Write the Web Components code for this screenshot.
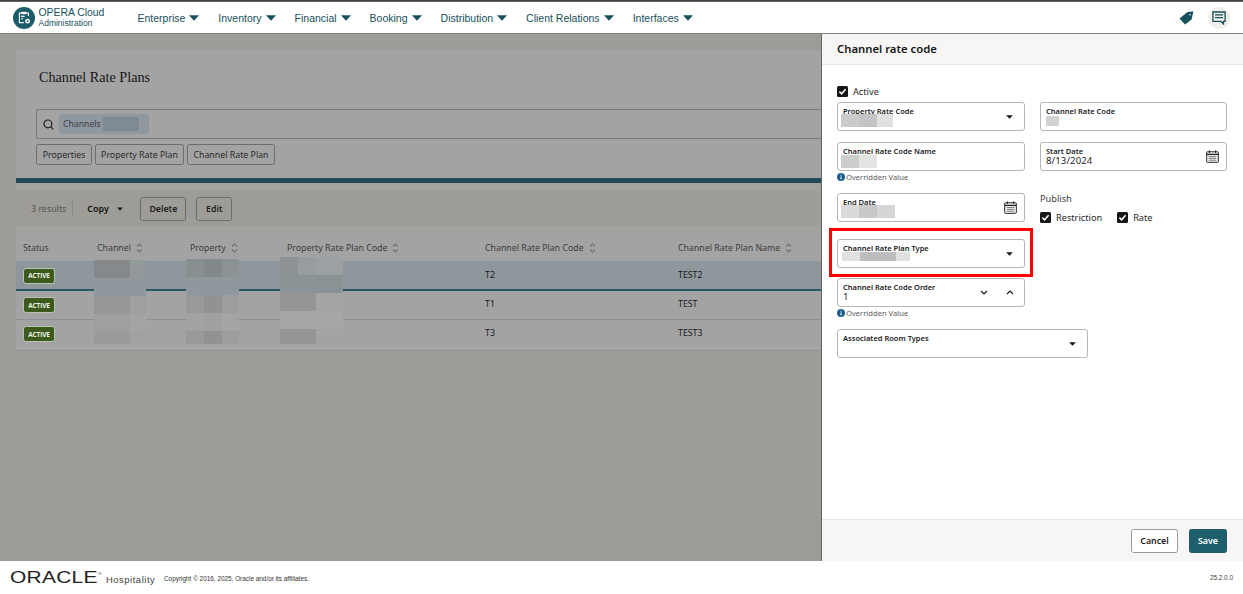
<!DOCTYPE html>
<html lang="en"><head><meta charset="utf-8"><title>Channel Rate Plans</title>
<style>
html,body{margin:0;padding:0;height:100%;overflow:hidden;background:#fff}
body{font-family:"Noto Sans","Liberation Sans",sans-serif}
</style></head><body>
<app-shell>
  <app-header slot="header"></app-header>
  <rate-plans-page slot="content"></rate-plans-page>
  <rate-drawer slot="drawer"></rate-drawer>
  <app-footer slot="footer"></app-footer>
</app-shell>
<script>
const caret=(w,h,c)=>`<svg width="${w}" height="${h}" viewBox="0 0 10 6" style="flex:none"><path d="M0 .3h10L5 5.8z" fill="${c}"/></svg>`;
const calendar=`<svg width="13" height="13" viewBox="0 0 13 13" fill="none" stroke="#222" stroke-width="1"><rect x=".7" y="1.8" width="11.6" height="10.5" rx=".6"/><path d="M3.4.4v2.6M9.6.4v2.6"/><path d="M.7 4.4h11.6" stroke-width="1.4"/><path d="M2.6 6.6h7.8M2.6 8.4h7.8M2.6 10.2h7.8" stroke="#777"/></svg>`;
const sortIc=`<svg width="7" height="10" viewBox="0 0 7 10" fill="none" stroke="#444" stroke-width=".9" style="flex:none"><path d="M1 3.4 3.5 1 6 3.4M1 6.6 3.5 9 6 6.6"/></svg>`;
class Base extends HTMLElement{
  constructor(){super();this.attachShadow({mode:'open'})}
  render(html){this.shadowRoot.innerHTML=html}
}
class AppShell extends Base{connectedCallback(){this.render(`<style>
:host{display:flex;flex-direction:column;height:594px;width:1243px;position:relative;overflow:hidden;background:#fff}
.main{flex:1;min-height:0;display:flex;background:#9d9c98}
.c{flex:1;min-width:0;display:flex;flex-direction:column}
.topline{height:2px;background:linear-gradient(#2d2d2d,#777);flex:none}
</style><div class="topline"></div><slot name="header"></slot>
<div class="main"><div class="c"><slot name="content"></slot></div><slot name="drawer"></slot></div>
<slot name="footer"></slot>`)}}
class NavItem extends Base{connectedCallback(){this.render(`<style>
:host{display:inline-flex;align-items:center;gap:4px;color:#17505c;font:10.5px "Liberation Sans",sans-serif;white-space:nowrap}
</style><slot></slot>${caret(10,6,'#17505c')}`)}}
class AppHeader extends Base{connectedCallback(){this.render(`<style>
:host{display:flex;align-items:center;flex:none;background:#fff;position:relative;z-index:2;font-family:"Liberation Sans",sans-serif;border-bottom:1px solid #85837f;box-sizing:content-box;height:31px}
.logo{margin-left:13px;width:22px;height:22px;flex:none;margin-top:1px}
.brand{margin-left:3.5px;width:99px;flex:none;color:#17505c;display:flex;flex-direction:column;gap:1px;margin-top:-1px}
.b1{font-size:10.4px;line-height:10px;display:block}
.b2{font-size:8.5px;line-height:8px;display:block}
nav{display:flex;gap:19px;margin-top:1px}
.sp{flex:1}
.chat{width:22px;height:22px;border-radius:50%;background:#f1efea;display:flex;align-items:center;justify-content:center;margin:1px 13px 0 14px}
.tag{margin-top:1px}
</style>
<svg class="logo" viewBox="0 0 22 22"><circle cx="11" cy="11" r="11" fill="#1c5c68"/>
<g fill="none" stroke="#fff" stroke-width="1.1"><path d="M9 6H6.4v9.6h4.4"/><path d="M13 6h2.4v3"/><rect x="8.4" y="4.8" width="5" height="2.4" fill="#fff" stroke="none"/><path d="M8.2 9.4h3.4M8.2 11.8h2"/></g>
<circle cx="14.6" cy="14.2" r="2.4" fill="#fff"/><circle cx="14.6" cy="14.2" r=".9" fill="#1c5c68"/></svg>
<span class="brand"><span class="b1">OPERA Cloud</span><span class="b2">Administration</span></span>
<nav><nav-item>Enterprise</nav-item><nav-item>Inventory</nav-item><nav-item>Financial</nav-item><nav-item>Booking</nav-item><nav-item>Distribution</nav-item><nav-item>Client Relations</nav-item><nav-item>Interfaces</nav-item></nav>
<span class="sp"></span>
<svg class="tag" width="15" height="14" viewBox="0 0 15 14"><path d="M14.4.3 8.2 1.2.5 7.4 6 13.6l6.6-5.2z" fill="#17505c"/><circle cx="11" cy="3.8" r=".8" fill="#fff"/></svg>
<span class="chat"><svg width="14" height="14" viewBox="0 0 14 14" fill="none" stroke="#17505c" stroke-width="1.3"><path d="M.9 1h12.2v9.4h-1.6v2.6L9 10.4H.9z"/><path d="M3 3.8h8M3 6.6h8" stroke-width="1.2"/></svg></span>`)}}
class BlurMosaic extends Base{connectedCallback(){
  const cols=this.dataset.cols,rows=this.dataset.rows,t=this.dataset.tiles.split(' ');
  this.render(`<style>:host{display:grid;position:absolute;grid-template-columns:${cols.split(' ').map(v=>v+'px').join(' ')};grid-template-rows:${rows.split(' ').map(v=>v+'px').join(' ')};z-index:1}</style>`+t.map(c=>`<i style="background:${c}"></i>`).join(''))}}
class PlainButton extends Base{connectedCallback(){
  const k=this.getAttribute('kind')||'plain';
  const st={plain:`border:1px solid #6d6d6b;background:transparent;color:#1f1f1f`,
    chip:`border:1px solid #6d6d6b;background:transparent;color:#2a2a2a`,
    white:`border:1px solid #9a9a98;background:#fff;color:#1f1f1f`,
    save:`border:1px solid #1b5a66;background:#1f5f6b;color:#fff;`}[k];
  this.render(`<style>:host{display:inline-flex;align-items:center;justify-content:center;box-sizing:border-box;border-radius:2.5px;${st};font:${k=='chip'?400:600} 8.8px "Noto Sans",sans-serif;height:var(--h,24px);white-space:nowrap}</style><slot></slot>`)}}
class RatePlansPage extends Base{connectedCallback(){this.render(`<style>
:host{display:flex;flex-direction:column;flex:1;padding:16px 0 0 16px;background:#9d9c98;min-height:0}
.top{background:#a3a3a3;height:128px;flex:none;display:flex;flex-direction:column;position:relative}
h1{font:400 14.2px "Liberation Serif",serif;margin:20px 0 0 23px;color:#161616;height:14px;line-height:14px}
.search{margin:25px 0 0 20px;height:30px;box-sizing:border-box;border:1px solid #787876;border-right:none;border-radius:2px 0 0 2px;display:flex;align-items:center;padding-left:6px}
.chip{margin-left:5px;width:90px;height:20px;background:#8f979f;border-radius:3px;display:flex;align-items:center;padding-left:4px;font:400 8.7px "Noto Sans",sans-serif;color:#3c444a;position:relative;box-sizing:border-box}
.row{display:flex;gap:3px;margin:5px 0 0 20px;--h:21px}
.bar{height:5px;background:#1f4a55;flex:none}
.toolwrap{background:#a2a2a1;padding-top:8px;flex:none}
.tool{height:35px;background:#9d9c96;display:flex;align-items:center;font:400 8.9px "Noto Sans",sans-serif;color:#55554f;position:relative}
.res{margin-left:15px}
.div{width:1px;height:16px;background:#8c8b85;margin-left:6px}
.copy{margin-left:14px;color:#111;font-weight:600;display:flex;align-items:center;gap:8px;width:53px}
</style>
<div class="top"><h1>Channel Rate Plans</h1>
<div class="search"><svg width="11" height="11" viewBox="0 0 11 11" fill="none" stroke="#1d1d1d" stroke-width="1.2"><circle cx="4.9" cy="4.9" r="3.9"/><path d="M7.7 7.7 10.3 10.3"/></svg>
<span class="chip">Channels<blur-mosaic style="left:44px;top:3px" data-cols="18 18" data-rows="14" data-tiles="#7f8a92 #7f8a92"></blur-mosaic></span></div>
<div class="row"><plain-button kind="chip" style="width:56px">Properties</plain-button><plain-button kind="chip" style="width:89px">Property Rate Plan</plain-button><plain-button kind="chip" style="width:88px">Channel Rate Plan</plain-button></div>
</div>
<div class="bar"></div>
<div class="toolwrap"><div class="tool"><span class="res">3 results</span><span class="div"></span><span class="copy">Copy ${caret(6,4,'#222')}</span><plain-button style="width:46px">Delete</plain-button><plain-button style="width:36px;margin-left:10px">Edit</plain-button></div></div>
<plan-table></plan-table>`)}}
class PlanTable extends Base{connectedCallback(){
  const heads=[['Status',0],['Channel',1],['Property',1],['Property Rate Plan Code',1],['Channel Rate Plan Code',1],['Channel Rate Plan Name',1]];
  const rows=[['T2','TEST2',1],['T1','TEST',0],['T3','TEST3',0]];
  this.render(`<style>
:host{display:block;position:relative;background:#a2a2a1;padding-top:9px;flex:none;font:400 8.8px "Noto Sans",sans-serif}
.g{display:grid;grid-template-columns:74px 93px 97px 198px 193px 1fr}
.g>*{padding-left:7px;display:flex;align-items:center;gap:5px;white-space:nowrap;min-width:0;box-sizing:border-box}
.h{height:26px;color:#3d3d3d;background:#a3a3a3}
.r{height:29px;color:#1a1a1a;border-bottom:1px solid #8f8f8f;background:#a3a3a3;box-sizing:border-box;padding-bottom:2px}
.r.s{height:30px;background:#8e979c;border-bottom:2px solid #245a65;box-shadow:0 1px 0 #b4b4b4;padding-bottom:1px}
.r.l{border-bottom-color:#b0b0af}
.badge{display:inline-flex;align-items:center;justify-content:center;width:32px;height:16px;box-sizing:border-box;margin-top:2px;background:#3b5a1b;border:1px solid #b9c2ae;border-radius:3px;color:#eef2e6;font:700 6.4px "Open Sans",sans-serif;letter-spacing:-.1px}
</style>
<div class="g h">${heads.map(h=>`<span>${h[0]}${h[1]?sortIc:''}</span>`).join('')}</div>
${rows.map((r,i)=>`<div class="g r ${r[2]?'s':''} ${i==2?'l':''}"><span><span class="badge">ACTIVE</span></span><span></span><span></span><span></span><span>${r[0]}</span><span>${r[1]}</span></div>`).join('')}
<blur-mosaic style="left:78px;top:34px" data-cols="36 16" data-rows="18 18 18 18 12" data-tiles="#85898b #93989b #8f989c #8f989c #979797 #a0a0a0 #9f9f9f #a4a4a4 #9a9a9a #a2a2a2"></blur-mosaic>
<blur-mosaic style="left:170px;top:33px" data-cols="18 18 17" data-rows="18 18 18 18 13" data-tiles="#898e91 #83888a #8c9194 #8f989d #8f989d #8f989d #9a9a9a #929292 #9d9d9d #a2a2a2 #a0a0a0 #a4a4a4 #999999 #929292 #9d9d9d"></blur-mosaic>
<blur-mosaic style="left:264px;top:31px" data-cols="18 18 27" data-rows="18 18 18 18 15" data-tiles="#8d9295 #979ca0 #9aa0a4 #8c9396 #8c9396 #899295 #959595 #959595 #a5a5a5 #a6a6a6 #a6a6a6 #a6a6a6 #959595 #959595 transparent"></blur-mosaic>`)}}
class CheckItem extends Base{connectedCallback(){this.render(`<style>
:host{display:inline-flex;align-items:center;gap:5px;font:400 9.2px "Noto Sans",sans-serif;color:#2a2a2a;height:11px}
.b{width:11px;height:11px;background:#161616;border-radius:1.5px;display:flex;flex:none}
</style><span class="b"><svg width="11" height="11" viewBox="0 0 11 11" fill="none" stroke="#fff" stroke-width="1.5"><path d="M2.4 5.6 4.6 7.8 8.6 3.2"/></svg></span><slot></slot>`)}}
class FormField extends Base{connectedCallback(){
  const ic=this.getAttribute('icon');
  const icon=ic=='caret'?`<span class="ic c">${caret(7,4,'#161616')}</span>`:ic=='cal'?`<span class="ic k">${calendar}</span>`:
   ic=='spin'?`<span class="ic sp"><svg width="8" height="5" viewBox="0 0 8 5" fill="none" stroke="#161616" stroke-width="1.1"><path d="M1 1l3 3 3-3"/></svg><svg width="8" height="5" viewBox="0 0 8 5" fill="none" stroke="#161616" stroke-width="1.1"><path d="M1 4l3-3 3 3"/></svg></span>`:'';
  const v=this.getAttribute('value')||'';
  this.render(`<style>
:host{display:block;position:relative;height:29px;box-sizing:border-box;border:1px solid #b6b6b4;border-radius:3px;background:#fff;width:var(--w,188px)}
.l{position:absolute;left:5px;top:4px;font:600 7.5px/8px "Noto Sans",sans-serif;color:#1b1b1b;white-space:nowrap}
.v{position:absolute;left:5px;top:13px;font:400 9.6px/10px "Noto Sans",sans-serif;color:#1f1f1f;letter-spacing:.1px}
.ic{position:absolute;top:0;bottom:0;display:flex;align-items:center}
.c{right:11px}.k{right:7px}
.sp{right:10px;gap:18px}
</style><span class="l">${this.getAttribute('label')}</span>${v?`<span class="v">${v}</span>`:''}<slot></slot>${icon}`)}}
class HintText extends Base{connectedCallback(){this.render(`<style>
:host{display:flex;align-items:center;gap:1px;height:11px;font:400 7.6px "Noto Sans",sans-serif;color:#5a5a5a;white-space:nowrap}
</style><svg width="8" height="8" viewBox="0 0 8 8"><circle cx="4" cy="4" r="4" fill="#1c5f8a"/><path d="M4 3.4v2.9M4 1.6v1" stroke="#fff" stroke-width="1"/></svg><slot></slot>`)}}
class RateDrawer extends Base{connectedCallback(){this.render(`<style>
:host{display:flex;flex-direction:column;width:422px;flex:none;background:#fff;border-left:1px solid #65645f;box-sizing:border-box;min-height:0;position:relative}
.hd{height:31px;flex:none;background:#f7f6f4;border-bottom:1px solid #e7e6e3;box-sizing:border-box;display:flex;align-items:center;padding:0 0 2px 15px;font:600 11.3px "Noto Sans",sans-serif;color:#161616}
.bd{flex:1;padding:21px 0 0 15px;display:flex;flex-direction:column;min-height:0}
.g{display:grid;grid-template-columns:188px 187px;column-gap:15px;align-items:start}
.act{margin-bottom:5px;display:flex;height:11px}
.g2,.g3{margin-top:11px}
.g3{height:29px}
.g .w{--w:187px}
.pub{font:400 9.2px "Noto Sans",sans-serif;color:#3c3c3c}
.pub div{height:11px;line-height:11px}
.cks{display:flex;gap:15px;margin-top:8px}
.red{border:3px solid #ff0000;box-sizing:border-box;width:204px;height:49px;margin:6px 0 1px -8px;padding:8px 5px 0;flex:none}
.as{margin-top:11px;--w:251px}
.bd>form-field{flex:none}
.ft{height:42px;flex:none;background:#f7f6f4;border-top:1px solid #e7e6e3;box-sizing:border-box;display:flex;align-items:center;justify-content:flex-end;gap:11px;padding:0 16px 0 0;--h:24px}
</style>
<div class="hd">Channel rate code</div>
<div class="bd">
  <div class="act"><check-item>Active</check-item></div>
  <div class="g"><form-field label="Property Rate Code" icon="caret"><blur-mosaic style="left:3px;top:11px" data-cols="18 18 16" data-rows="13" data-tiles="#cbcbcb #c4c4c4 #e0e0e0"></blur-mosaic></form-field>
  <form-field class="w" label="Channel Rate Code"><blur-mosaic style="left:5px;top:13px" data-cols="13" data-rows="10" data-tiles="#d2d2d2"></blur-mosaic></form-field></div>
  <div class="g g2"><div><form-field label="Channel Rate Code Name"><blur-mosaic style="left:3px;top:12px" data-cols="18 18" data-rows="13" data-tiles="#cdcdcd #e3e3e3"></blur-mosaic></form-field><hint-text>Overridden Value</hint-text></div>
  <form-field class="w" label="Start Date" value="8/13/2024" icon="cal"></form-field></div>
  <div class="g g3"><form-field label="End Date" icon="cal"><blur-mosaic style="left:3px;top:11px" data-cols="18 18 18" data-rows="13" data-tiles="#dadada #c8c8c8 #d6d6d6"></blur-mosaic></form-field>
  <div class="pub"><div>Publish</div><div class="cks"><check-item>Restriction</check-item><check-item>Rate</check-item></div></div></div>
  <div class="red"><form-field label="Channel Rate Plan Type" icon="caret"><blur-mosaic style="left:4px;top:12px" data-cols="18 36 14" data-rows="9" data-tiles="#e0e0e0 #bdbdbd #e0e0e0"></blur-mosaic></form-field></div>
  <form-field label="Channel Rate Code Order" value="1" icon="spin"></form-field>
  <hint-text>Overridden Value</hint-text>
  <form-field class="as" label="Associated Room Types" icon="caret"></form-field>
</div>
<div class="ft"><plain-button kind="white" style="width:47px">Cancel</plain-button><plain-button kind="save" style="width:38px">Save</plain-button></div>`)}}
class AppFooter extends Base{connectedCallback(){this.render(`<style>
:host{display:flex;align-items:center;height:33px;flex:none;background:#fff;color:#333;position:relative;z-index:2;font-family:"Liberation Sans",sans-serif}
.o{margin-left:10px;width:89px;font-size:16px;line-height:16px;color:#222;letter-spacing:.2px;transform:scaleX(1.31);transform-origin:0 50%;white-space:nowrap;flex:none;font-weight:400}
.o sup{font-size:4px;vertical-align:8px;line-height:0}
.h{margin-left:7px;font-size:9.4px;letter-spacing:.55px;color:#444;width:58px;flex:none;margin-top:3px}
.c{font-size:6.4px;color:#333;margin-top:1px}
.sp{flex:1}
.v{font-size:6.4px;color:#444;margin-right:10px}
</style><span class="o">ORACLE<sup>®</sup></span><span class="h">Hospitality</span><span class="c">Copyright © 2016, 2025, Oracle and/or its affiliates.</span><span class="sp"></span><span class="v">25.2.0.0</span>`)}}
[['app-shell',AppShell],['nav-item',NavItem],['app-header',AppHeader],['blur-mosaic',BlurMosaic],['plain-button',PlainButton],['rate-plans-page',RatePlansPage],['plan-table',PlanTable],['check-item',CheckItem],['form-field',FormField],['hint-text',HintText],['rate-drawer',RateDrawer],['app-footer',AppFooter]].forEach(([n,c])=>customElements.define(n,c));
</script>
</body></html>
